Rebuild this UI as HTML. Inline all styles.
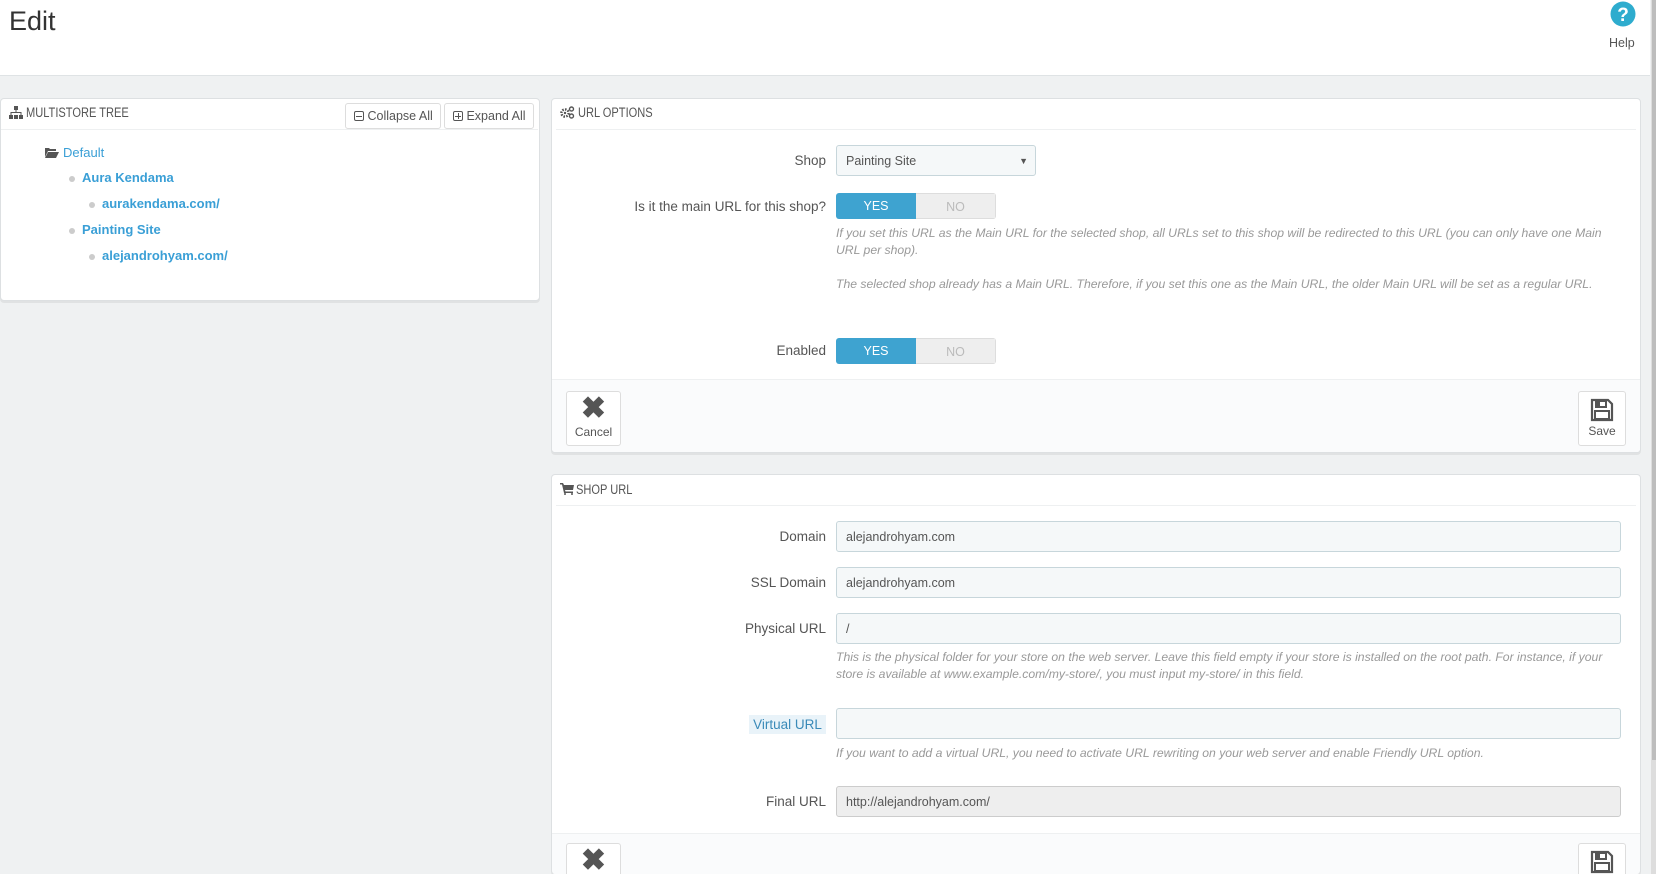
<!DOCTYPE html>
<html style="overflow:hidden;height:874px"><head><meta charset="utf-8"><style>
*{box-sizing:border-box;margin:0;padding:0}
body{width:1656px;height:874px;overflow:hidden;background:#eff1f2;font-family:"Liberation Sans",sans-serif;font-size:13px;color:#555;position:relative}
.abs{position:absolute}
.hdr{left:0;top:0;width:1650px;height:76px;background:#fff;border-bottom:1px solid #dfe3e5}
.panel{background:#fff;border:1px solid #dde0e2;border-radius:4px;box-shadow:0 2px 0 rgba(0,0,0,.06)}
.ptitle{font-family:"Liberation Sans Narrow","Liberation Sans",sans-serif;font-size:13.5px;color:#555;text-transform:uppercase;transform:scaleX(0.82);transform-origin:left top}
.hline{height:1px;background:#eef0f1}
.btn{border:1px solid #ddd;border-radius:3px;background:#fff;color:#555;font-size:12.5px}
.lbl{text-align:right;font-size:13.5px;color:#555}
.inp{border:1px solid #c7d6db;border-radius:3px;background:#f5f8f9;font-size:12.5px;color:#555;padding-left:9px;line-height:30px}
.help{font-style:italic;color:#999;font-size:12.2px;line-height:17px}
.tog{width:160px;height:26px;border-radius:3px;overflow:hidden;display:flex;font-size:12.5px}
.tog .y{width:80px;background:#3ea3d0;color:#fff;text-align:center;line-height:26px}
.tog .n{width:80px;background:#eee;color:#bbb;text-align:center;line-height:26px;border:1px solid #ddd;border-left:none}
.a{color:#3a9fd6;font-weight:bold;font-size:13px}
.dot{width:6px;height:6px;border-radius:3px;background:#ccc}
.foot{background:#fafbfc;border-top:1px solid #eef0f1}
.bigbtn{border:1px solid #ddd;border-radius:3px;background:#fff;text-align:center;font-size:12px;color:#555}
</style></head><body>
<div class="abs hdr"></div>
<div class="abs" style="left:9px;top:6px;font-size:27px;color:#333">Edit</div>
<svg class="abs" style="left:1610px;top:1px" width="26" height="26" viewBox="0 0 26 26"><circle cx="13" cy="13" r="12.5" fill="#2eacce"/><text x="13" y="20" text-anchor="middle" font-family="Liberation Sans" font-weight="bold" font-size="19" fill="#fff">?</text></svg>
<div class="abs" style="left:1609px;top:36px;font-size:12.5px;color:#555">Help</div>
<div class="abs" style="left:1651px;top:0;width:5px;height:874px;background:#ddd"></div>
<div class="abs" style="left:1652px;top:0;width:4px;height:760px;background:#bdbdbd"></div>

<div class="abs panel" style="left:0;top:98px;width:540px;height:203px"></div>
<svg class="abs" style="left:9px;top:106px" width="14" height="13" viewBox="0 0 14 13"><rect x="5" y="0" width="4" height="4" fill="#555"/><rect x="6.5" y="4" width="1" height="3" fill="#555"/><rect x="1.5" y="6" width="11" height="1" fill="#555"/><rect x="1.5" y="6" width="1" height="3" fill="#555"/><rect x="11.5" y="6" width="1" height="3" fill="#555"/><rect x="0" y="9" width="4" height="4" fill="#555"/><rect x="5" y="9" width="4" height="4" fill="#555"/><rect x="10" y="9" width="4" height="4" fill="#555"/></svg>
<div class="abs ptitle" style="left:26px;top:105px">Multistore tree</div>
<div class="abs hline" style="left:1px;top:129px;width:537px"></div>
<div class="abs btn" style="left:345px;top:103px;width:96px;height:26px;line-height:24px;padding-left:8px"><span style="display:inline-block;width:10px;height:10px;border:1px solid #555;border-radius:2px;vertical-align:-1px;position:relative"><span style="position:absolute;left:1px;top:3.5px;width:6px;height:1px;background:#555"></span></span> Collapse All</div>
<div class="abs btn" style="left:444px;top:103px;width:90px;height:26px;line-height:24px;padding-left:8px"><span style="display:inline-block;width:10px;height:10px;border:1px solid #555;border-radius:2px;vertical-align:-1px;position:relative"><span style="position:absolute;left:1px;top:3.5px;width:6px;height:1px;background:#555"></span><span style="position:absolute;left:3.5px;top:1px;width:1px;height:6px;background:#555"></span></span> Expand All</div>
<svg class="abs" style="left:45px;top:147px" width="14" height="11" viewBox="0 0 14 11"><path d="M0 1h4l1 1h6v2H3L0 10z" fill="#555"/><path d="M3 5h11l-3 6H0z" fill="#555"/></svg>
<div class="abs" style="left:63px;top:145px;color:#3a9fd6;font-size:13px">Default</div>
<div class="abs dot" style="left:69px;top:176px"></div><div class="abs a" style="left:82px;top:170px">Aura Kendama</div>
<div class="abs dot" style="left:89px;top:202px"></div><div class="abs a" style="left:102px;top:196px">aurakendama.com/</div>
<div class="abs dot" style="left:69px;top:228px"></div><div class="abs a" style="left:82px;top:222px">Painting Site</div>
<div class="abs dot" style="left:89px;top:254px"></div><div class="abs a" style="left:102px;top:248px">alejandrohyam.com/</div>

<div class="abs panel" style="left:551px;top:98px;width:1090px;height:355px;overflow:hidden">
  <div class="abs foot" style="left:0;top:280px;width:1090px;height:75px"></div>
</div>
<svg class="abs" style="left:560px;top:106px" width="15" height="13" viewBox="0 0 15 13"><circle cx="5" cy="7" r="3.6" fill="none" stroke="#555" stroke-width="2.4" stroke-dasharray="1.6 1.2"/><circle cx="5" cy="7" r="1.2" fill="#555"/><circle cx="11.5" cy="3" r="2" fill="none" stroke="#555" stroke-width="1.4"/><circle cx="11.5" cy="10" r="2" fill="none" stroke="#555" stroke-width="1.4"/></svg>
<div class="abs ptitle" style="left:578px;top:105px">URL Options</div>
<div class="abs hline" style="left:556px;top:129px;width:1080px"></div>
<div class="abs lbl" style="left:600px;top:153px;width:226px">Shop</div>
<div class="abs inp" style="left:836px;top:145px;width:200px;height:31px;background:#f5f8f9">Painting Site<span style="position:absolute;right:7px;top:0;font-size:9px">▼</span></div>
<div class="abs lbl" style="left:500px;top:199px;width:326px">Is it the main URL for this shop?</div>
<div class="abs tog" style="left:836px;top:193px"><div class="y">YES</div><div class="n">NO</div></div>
<div class="abs help" style="left:836px;top:225px;width:790px">If you set this URL as the Main URL for the selected shop, all URLs set to this shop will be redirected to this URL (you can only have one Main URL per shop).<br><br>The selected shop already has a Main URL. Therefore, if you set this one as the Main URL, the older Main URL will be set as a regular URL.</div>
<div class="abs lbl" style="left:600px;top:343px;width:226px">Enabled</div>
<div class="abs tog" style="left:836px;top:338px"><div class="y">YES</div><div class="n">NO</div></div>
<div class="abs bigbtn" style="left:566px;top:391px;width:55px;height:55px"><div style="font-size:30px;font-weight:bold;line-height:32px;margin-top:1px;color:#555">✖</div>Cancel</div>
<div class="abs bigbtn" style="left:1578px;top:391px;width:48px;height:55px"><svg style="margin-top:6px" width="24" height="24" viewBox="0 0 24 24"><path d="M2 2h16l4 4v16H2z" fill="none" stroke="#555" stroke-width="2.2"/><rect x="6" y="3" width="10" height="6" fill="none" stroke="#555" stroke-width="2"/><rect x="7" y="4" width="3" height="4" fill="#555"/><rect x="5" y="13" width="14" height="8" fill="none" stroke="#555" stroke-width="2"/></svg><div style="line-height:12px">Save</div></div>

<div class="abs panel" style="left:551px;top:474px;width:1090px;height:400px;overflow:hidden;border-bottom:none">
  <div class="abs foot" style="left:0;top:358px;width:1090px;height:60px"></div>
</div>
<svg class="abs" style="left:560px;top:483px" width="14" height="12" viewBox="0 0 14 12"><path d="M0 0h3l1 2h10l-1 5H5l.5 1.5H13V10H4L2 1.5H0z" fill="#555"/><circle cx="5" cy="11" r="1" fill="#555"/><circle cx="12" cy="11" r="1" fill="#555"/></svg>
<div class="abs ptitle" style="left:576px;top:482px">Shop URL</div>
<div class="abs hline" style="left:556px;top:505px;width:1080px"></div>
<div class="abs lbl" style="left:600px;top:529px;width:226px">Domain</div>
<div class="abs inp" style="left:836px;top:521px;width:785px;height:31px">alejandrohyam.com</div>
<div class="abs lbl" style="left:600px;top:575px;width:226px">SSL Domain</div>
<div class="abs inp" style="left:836px;top:567px;width:785px;height:31px">alejandrohyam.com</div>
<div class="abs lbl" style="left:600px;top:621px;width:226px">Physical URL</div>
<div class="abs inp" style="left:836px;top:613px;width:785px;height:31px">/</div>
<div class="abs help" style="left:836px;top:649px;width:780px">This is the physical folder for your store on the web server. Leave this field empty if your store is installed on the root path. For instance, if your store is available at www.example.com/my-store/, you must input my-store/ in this field.</div>
<div class="abs" style="left:749px;top:715px;width:77px;height:19px;background:#e9f3f9;color:#3a8ab8;font-size:13.5px;text-align:center;line-height:19px">Virtual URL</div>
<div class="abs inp" style="left:836px;top:708px;width:785px;height:31px"></div>
<div class="abs help" style="left:836px;top:745px">If you want to add a virtual URL, you need to activate URL rewriting on your web server and enable Friendly URL option.</div>
<div class="abs lbl" style="left:600px;top:794px;width:226px">Final URL</div>
<div class="abs inp" style="left:836px;top:786px;width:785px;height:31px;background:#eee;border-color:#ccc">http://alejandrohyam.com/</div>
<div class="abs bigbtn" style="left:566px;top:843px;width:55px;height:40px"><div style="font-size:30px;font-weight:bold;line-height:32px;margin-top:1px;color:#555">✖</div></div>
<div class="abs bigbtn" style="left:1578px;top:843px;width:48px;height:40px"><svg style="margin-top:6px" width="24" height="24" viewBox="0 0 24 24"><path d="M2 2h16l4 4v16H2z" fill="none" stroke="#555" stroke-width="2.2"/><rect x="6" y="3" width="10" height="6" fill="none" stroke="#555" stroke-width="2"/><rect x="7" y="4" width="3" height="4" fill="#555"/><rect x="5" y="13" width="14" height="8" fill="none" stroke="#555" stroke-width="2"/></svg></div>
</body></html>
